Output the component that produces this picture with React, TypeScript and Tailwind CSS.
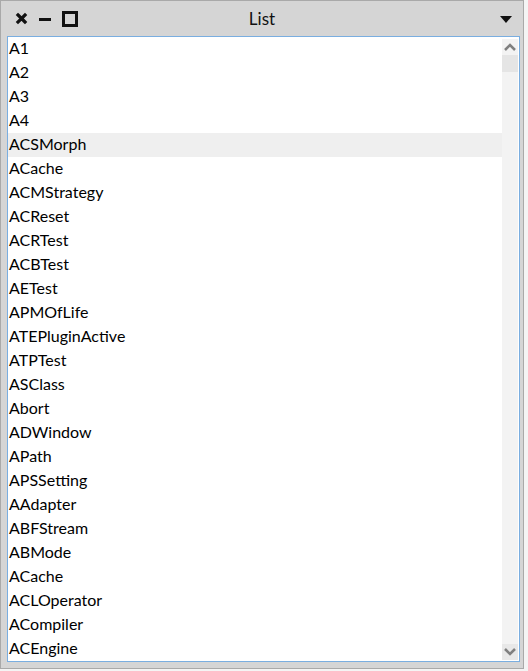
const items = [
  "A1", "A2", "A3", "A4", "ACSMorph", "ACache", "ACMStrategy", "ACReset", "ACRTest",
  "ACBTest", "AETest", "APMOfLife", "ATEPluginActive", "ATPTest", "ASClass", "Abort",
  "ADWindow", "APath", "APSSetting", "AAdapter", "ABFStream", "ABMode", "ACache",
  "ACLOperator", "ACompiler", "ACEngine",
];

const App = () => {
  return (
    <div className="w-[528px] h-[671px] bg-[#f4f4f4] overflow-hidden" style={{ fontFamily: "Lato, sans-serif" }}>
      <div className="w-[524px] h-[669px] bg-[#d5d5d5] border border-[#a9a9a9] flex flex-col">
        {/* title bar */}
        <div className="h-[35px] flex items-center relative shrink-0">
          <div className="flex items-center gap-[10px] pl-[14px]">
            <svg width="13" height="13" viewBox="0 0 13 13">
              <path d="M3 3 L10 10 M10 3 L3 10" stroke="#111" strokeWidth="3.2" strokeLinecap="square" />
            </svg>
            <svg width="14" height="14" viewBox="0 0 14 14">
              <rect x="1" y="6" width="12" height="3" fill="#111" />
            </svg>
            <svg width="16" height="16" viewBox="0 0 16 16">
              <rect x="1.5" y="1.5" width="13" height="13" fill="none" stroke="#111" strokeWidth="3" />
            </svg>
          </div>
          <div className="absolute left-0 right-0 text-center text-[17px] text-[#111] pointer-events-none">List</div>
          <svg className="absolute right-[10px] top-[14px]" width="14" height="9" viewBox="0 0 14 9">
            <path d="M1 1 H13 L7 8 Z" fill="#111" />
          </svg>
        </div>
        {/* list */}
        <div className="ml-[6px] mr-[3px] h-[626px] bg-white border border-[#7aaee0] flex">
          <div className="flex-1 flex flex-col">
            {items.map((it, i) => (
              <div
                key={i}
                className={`h-[24px] pl-[1px] pb-[3px] flex items-center text-[16px] text-[#000] leading-none ${i === 4 ? "bg-[#efefef]" : ""}`}
              >
                {it}
              </div>
            ))}
          </div>
          <div className="w-[16px] mr-[1px] mt-[2px] mb-[1px] flex flex-col bg-[#f3f3f3]">
            <div className="h-[16px] flex items-center justify-center">
              <svg width="12" height="8" viewBox="0 0 12 8">
                <path d="M1 7 L6 2 L11 7" fill="none" stroke="#808080" strokeWidth="2.5" />
              </svg>
            </div>
            <div className="h-[17px] bg-[#e5e5e5]" />
            <div className="flex-1" />
            <div className="h-[16px] flex items-center justify-center bg-[#e8e8e8]">
              <svg width="12" height="8" viewBox="0 0 12 8">
                <path d="M1 1 L6 6 L11 1" fill="none" stroke="#808080" strokeWidth="2.5" />
              </svg>
            </div>
          </div>
        </div>
      </div>
    </div>
  );
};

export default App;
